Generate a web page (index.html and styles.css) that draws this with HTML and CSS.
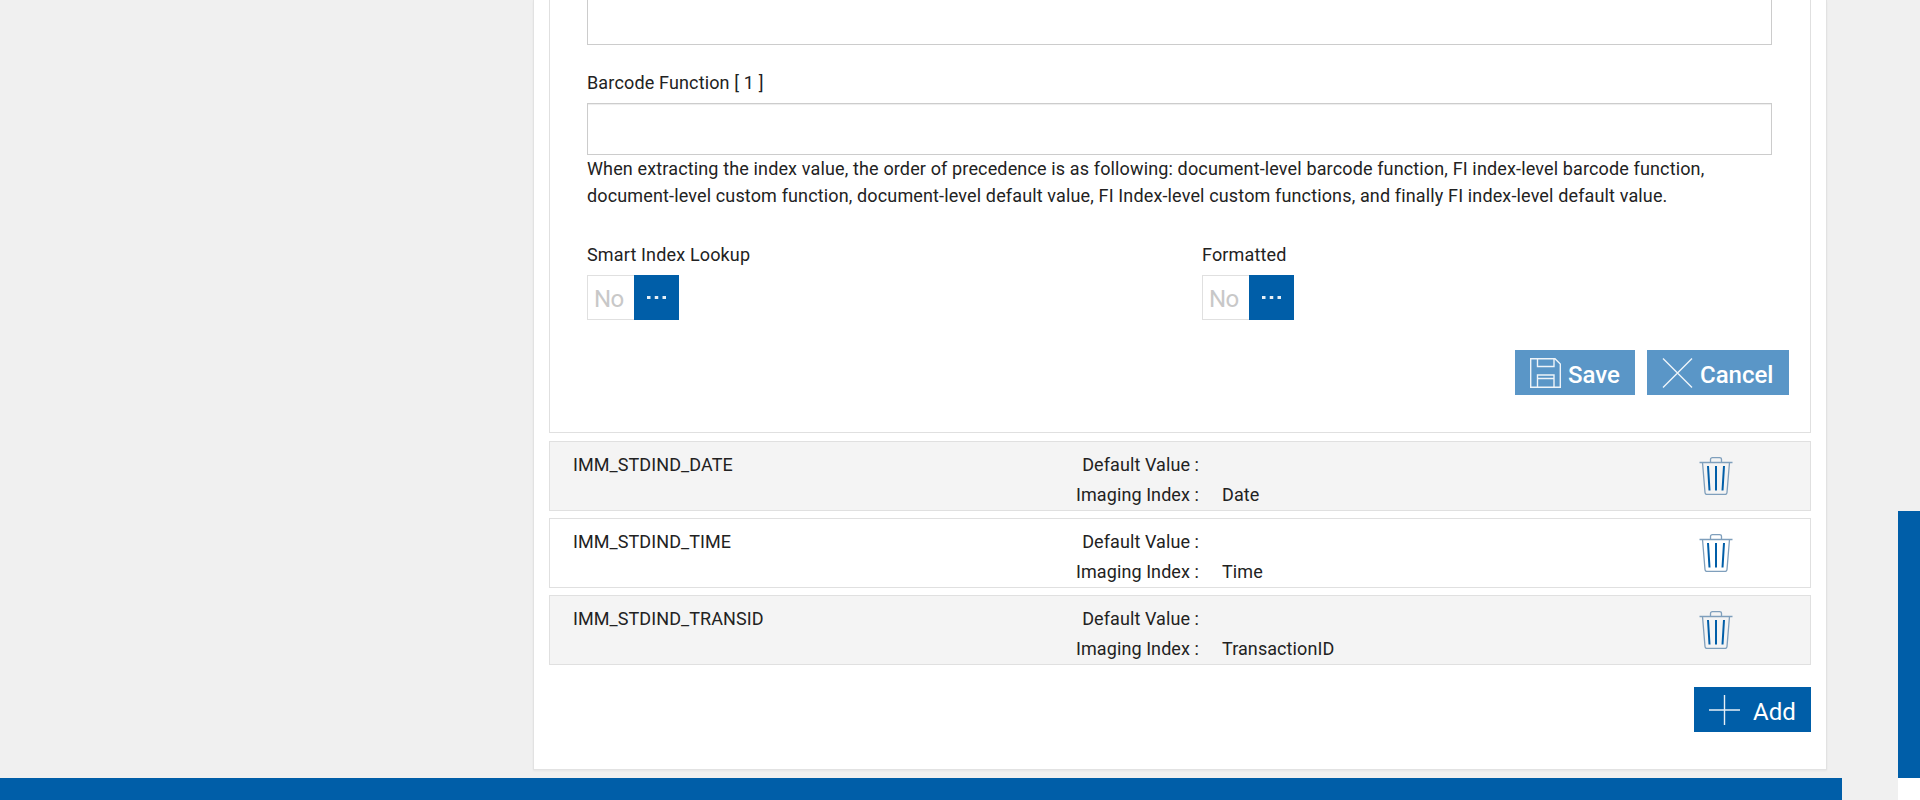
FILE: index.html
```html
<!DOCTYPE html>
<html lang="en">
<head>
<meta charset="utf-8">
<title>Index configuration</title>
<link rel="stylesheet" href="styles.css">
</head>
<body>
<svg class="sprites" width="0" height="0" aria-hidden="true">
  <symbol id="trash" viewBox="0 0 34 38">
    <path class="t-rim" d="M0.5 5.500H33.500M11.500 5.500V2.500Q11.500 .7 13.500 .7H20.500Q22.500 .7 22.500 2.500V5.500"/>
    <path class="t-body" d="M3.500 5.500L6 35.500Q6.100 37.500 8 37.500H26Q27.900 37.500 28 35.500L30.500 5.500"/>
    <path class="t-bars" d="M9 9L10.500 33.500M17 9V33.500M25 9L23.500 33.500"/>
  </symbol>
  <symbol id="dots" viewBox="0 0 19 3">
    <path d="M0 0H3.500V3H0ZM7.750 0H11.250V3H7.750ZM15.500 0H19V3H15.500Z"/>
  </symbol>
</svg>
<div class="layout">
  <main class="panel">
    <section class="form-card">
      <div class="input input-cut"></div>
      <label class="field-label">Barcode Function [ 1 ]</label>
      <div class="input"></div>
      <p class="help">When extracting the index value, the order of precedence is as following: document-level barcode function, FI index-level barcode function, document-level custom function, document-level default value, FI Index-level custom functions, and finally FI index-level default value.</p>
      <div class="toggles">
        <div class="toggle-field">
          <div class="field-label">Smart Index Lookup</div>
          <div class="toggle"><span class="toggle-off">No</span><span class="toggle-knob"><svg class="dots"><use href="#dots"/></svg></span></div>
        </div>
        <div class="toggle-field">
          <div class="field-label">Formatted</div>
          <div class="toggle"><span class="toggle-off">No</span><span class="toggle-knob"><svg class="dots"><use href="#dots"/></svg></span></div>
        </div>
      </div>
      <div class="actions">
        <button class="btn btn-muted btn-save">
          <svg class="btn-icon" viewBox="0 0 31 30"><path d="M.7 .7H25L30.300 6V29.300H.7ZM7.500 .7V8.500H24V.7M7.500 29.300V17H24V29.300M7.500 20.500H24"/></svg>
          <span>Save</span>
        </button>
        <button class="btn btn-muted btn-cancel">
          <svg class="btn-icon" viewBox="0 0 31 30"><path d="M1 .5L30 29.500M30 .5L1 29.500"/></svg>
          <span>Cancel</span>
        </button>
      </div>
    </section>

    <div class="index-list">
      <article class="index-row alt">
        <div class="index-name">IMM_STDIND_DATE</div>
        <div class="meta-label">Default Value :</div><div class="meta-value"></div>
        <svg class="trash"><use href="#trash"/></svg>
        <div class="meta-label second">Imaging Index :</div><div class="meta-value second">Date</div>
      </article>
      <article class="index-row">
        <div class="index-name">IMM_STDIND_TIME</div>
        <div class="meta-label">Default Value :</div><div class="meta-value"></div>
        <svg class="trash"><use href="#trash"/></svg>
        <div class="meta-label second">Imaging Index :</div><div class="meta-value second">Time</div>
      </article>
      <article class="index-row alt">
        <div class="index-name">IMM_STDIND_TRANSID</div>
        <div class="meta-label">Default Value :</div><div class="meta-value"></div>
        <svg class="trash"><use href="#trash"/></svg>
        <div class="meta-label second">Imaging Index :</div><div class="meta-value second">TransactionID</div>
      </article>
    </div>

    <div class="list-actions">
      <button class="btn btn-add">
        <svg class="btn-icon" viewBox="0 0 31 30"><path d="M0 15H31M15.500 0V30"/></svg>
        <span>Add</span>
      </button>
    </div>
  </main>
  <div class="scrollbar"><div class="scroll-thumb"></div></div>
</div>
<footer class="footer-bar"></footer>
</body>
</html>
```
FILE: styles.css
```css
* { box-sizing: border-box; }
html, body { margin: 0; height: 800px; overflow: hidden; }
body {
  background: #f0f0f0;
  color: #222;
  font-family: Roboto, "Liberation Sans", sans-serif;
  font-size: 18px;
  font-weight: 400;
  position: relative;
}
.sprites { position: absolute; }
.layout { display: flex; height: 778px; }
.panel {
  margin-left: 533px;
  width: 1294px;
  height: 770px;
  padding: 0 15px;
  background: #fff;
  border: 1px solid #e2e2e2;
  border-top: 0;
  box-shadow: 0 1px 2px rgba(0,0,0,.05);
}
.form-card {
  height: 433px;
  padding: 0 37px;
  border: 1px solid #e0e0e0;
  border-top: 0;
}
.input {
  height: 52px;
  width: 1185px;
  border: 1px solid #ccc;
  box-shadow: inset 0 1px 1px rgba(0,0,0,.075);
}
.input-cut { height: 45px; border-top: 0; box-shadow: none; }
.field-label { display: block; line-height: 24px; letter-spacing: .15px; }
.form-card > .field-label { margin: 26px 0 8px; }
.help { margin: 0; line-height: 27px; letter-spacing: .14px; }
.toggles { display: flex; margin-top: 34px; }
.toggle-field { flex: none; width: 615px; }
.toggle-field .field-label { margin-bottom: 8px; }
.toggle {
  display: flex;
  width: 92px;
  height: 45px;
  border: 1px solid #e0e0e0;
  border-right: 0;
}
.toggle-off {
  flex: 1;
  padding-left: 6px;
  color: #c8c8c8;
  font-size: 24px;
  letter-spacing: -.5px;
  line-height: 46px;
}
.toggle-knob {
  display: flex;
  align-items: center;
  justify-content: center;
  width: 45px;
  margin: -1px 0;
  background: #005ea8;
}
.dots { width: 19px; height: 3px; fill: #fff; opacity: .9; }
.actions { display: flex; justify-content: flex-end; gap: 12px; margin: 30px -16px 0 0; }
.btn {
  display: flex;
  align-items: center;
  gap: 7px;
  height: 45px;
  padding: 0 15px;
  border: 0;
  color: #fff;
  font-family: inherit;
  font-size: 24px;
  font-weight: 500;
}
.btn span { position: relative; top: 2px; }
.btn-muted { background: #5a96c7; }
.btn-save { width: 120px; }
.btn-cancel { width: 142px; }
.btn-add { background: #005ea8; padding: 0 15px; gap: 13px; width: 117px; font-weight: 400; }
.btn-icon {
  flex: none;
  width: 31px;
  height: 30px;
  fill: none;
  stroke: #fff;
  stroke-width: 1.4;
  opacity: .9;
}
.index-list { display: flex; flex-direction: column; gap: 7px; margin-top: 8px; }
.index-row {
  display: grid;
  grid-template-columns: 427px 199px 500px 34px;
  height: 70px;
  padding: 8px 0 0 23px;
  background: #fff;
  border: 1px solid #e0e0e0;
  line-height: 30px;
  letter-spacing: .08px;
}
.index-row.alt { background: #f4f4f4; }
.index-name { grid-column: 1; }
.meta-label { grid-column: 2; text-align: right; }
.meta-value { grid-column: 3; padding-left: 23px; }
.trash {
  grid-column: 4;
  grid-row: 1 / span 2;
  width: 34px;
  height: 38px;
  margin-top: 7px;
  fill: none;
}
.t-rim, .t-body { stroke: #7f9fbc; stroke-width: 1.3; }
.t-bars { stroke: #005ea8; stroke-width: 2; }
.list-actions { display: flex; justify-content: flex-end; margin-top: 22px; }
.scrollbar {
  position: absolute;
  right: 0;
  top: 0;
  bottom: 0;
  width: 22px;
  background: linear-gradient(#f0f0f0 778px, #fff 778px);
}
.scroll-thumb { height: 267px; margin-top: 511px; background: #005ea8; }
.footer-bar { position: absolute; left: 0; bottom: 0; width: 1842px; height: 22px; background: #005ea8; }
```
